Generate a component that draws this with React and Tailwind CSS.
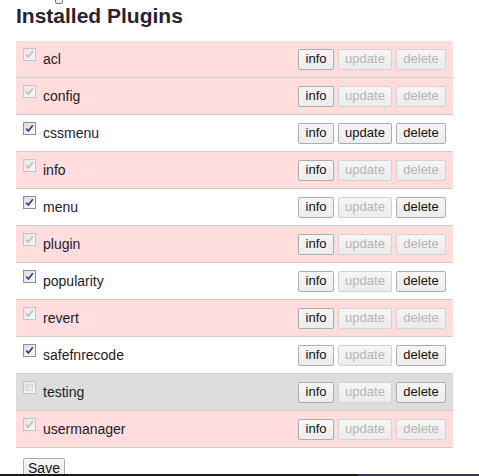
import React from "react";

const plugins = [
  { name: "acl", bg: "pink", checked: true, disabled: true, upd: false, del: false },
  { name: "config", bg: "pink", checked: true, disabled: true, upd: false, del: false },
  { name: "cssmenu", bg: "white", checked: true, disabled: false, upd: true, del: true },
  { name: "info", bg: "pink", checked: true, disabled: true, upd: false, del: false },
  { name: "menu", bg: "white", checked: true, disabled: false, upd: false, del: true },
  { name: "plugin", bg: "pink", checked: true, disabled: true, upd: false, del: false },
  { name: "popularity", bg: "white", checked: true, disabled: false, upd: false, del: true },
  { name: "revert", bg: "pink", checked: true, disabled: true, upd: false, del: false },
  { name: "safefnrecode", bg: "white", checked: true, disabled: false, upd: false, del: true },
  { name: "testing", bg: "gray", checked: false, disabled: true, upd: false, del: true },
  { name: "usermanager", bg: "pink", checked: true, disabled: true, upd: false, del: false },
];

function Check({ checked, disabled }) {
  return (
    <span
      className={
        "inline-flex w-[13px] h-[13px] shrink-0 items-center justify-center border " +
        (disabled
          ? "border-[#c4c4c4] bg-gradient-to-br from-[#e6e6e6] to-[#f8f8f8]"
          : "border-[#8e8f8f] bg-gradient-to-br from-[#dcdcdc] to-[#fbfbfb]")
      }
    >
      {checked ? (
        <svg width="9" height="9" viewBox="0 0 9 9">
          <path
            d="M1.2 4.6 L3.4 7 L7.8 1.2"
            fill="none"
            stroke={disabled ? "#bdbdbd" : "#2c3a9e"}
            strokeWidth="1.7"
          />
        </svg>
      ) : (
        <span className="h-[7px] w-[7px] border border-[#d6d6d6] bg-gradient-to-br from-[#dadada] to-[#f0f0f0]" />
      )}
    </span>
  );
}

function Btn({ children, enabled, w }) {
  return (
    <span
      className={
        "inline-flex h-[21px] items-center justify-center rounded-[2px] border text-[13px] bg-gradient-to-b from-[#f6f6f6] to-[#ececec] " +
        w +
        " " +
        (enabled ? "border-[#adadad] text-[#111]" : "border-[#d2d2d2] text-[#b4b4b4]")
      }
    >
      {children}
    </span>
  );
}

export default function App() {
  return (
    <div
      className="relative h-[476px] w-[479px] overflow-hidden bg-white pl-4"
      style={{ fontFamily: '"Liberation Sans", Arial, sans-serif' }}
    >
      <div className="absolute left-[55px] top-[-4px] h-[8px] w-[8px] rounded-[2px] border border-[#777] bg-[#eee]" />
      <h1 className="mt-[3px] mb-[13px] text-[21px] font-bold leading-[1.2] text-[#2a2230]">
        Installed Plugins
      </h1>
      <div className="w-[437px]">
        {plugins.map((p) => (
          <div
            key={p.name}
            className={
              "flex h-[37px] items-center border-b border-[#cbcbcb] pl-[7px] pr-[7px] " +
              (p.bg === "pink" ? "bg-[#ffdddd]" : p.bg === "gray" ? "bg-[#dddddd]" : "bg-white")
            }
          >
            <span className="flex h-full items-start pt-[7px]">
              <Check checked={p.checked} disabled={p.disabled} />
            </span>
            <span className="ml-[7px] text-[14px] text-[#1c1c28]">{p.name}</span>
            <div className="ml-auto flex gap-[4px]">
              <Btn enabled w="w-[36px]">info</Btn>
              <Btn enabled={p.upd} w="w-[54px]">update</Btn>
              <Btn enabled={p.del} w="w-[50px]">delete</Btn>
            </div>
          </div>
        ))}
      </div>
      <div className="mt-[8px] pl-[7px]">
        <span className="inline-flex h-[21px] w-[42px] items-center justify-center rounded-[2px] border border-[#adadad] bg-gradient-to-b from-[#f6f6f6] to-[#ececec] text-[14px] text-[#111]">
          Save
        </span>
      </div>
      <div className="absolute bottom-0 left-0 flex h-[2px] w-full">
        <div className="h-full w-[358px] bg-[#1a1a1a]" />
        <div className="h-full flex-1 bg-[#3a3a55]" />
      </div>
    </div>
  );
}
